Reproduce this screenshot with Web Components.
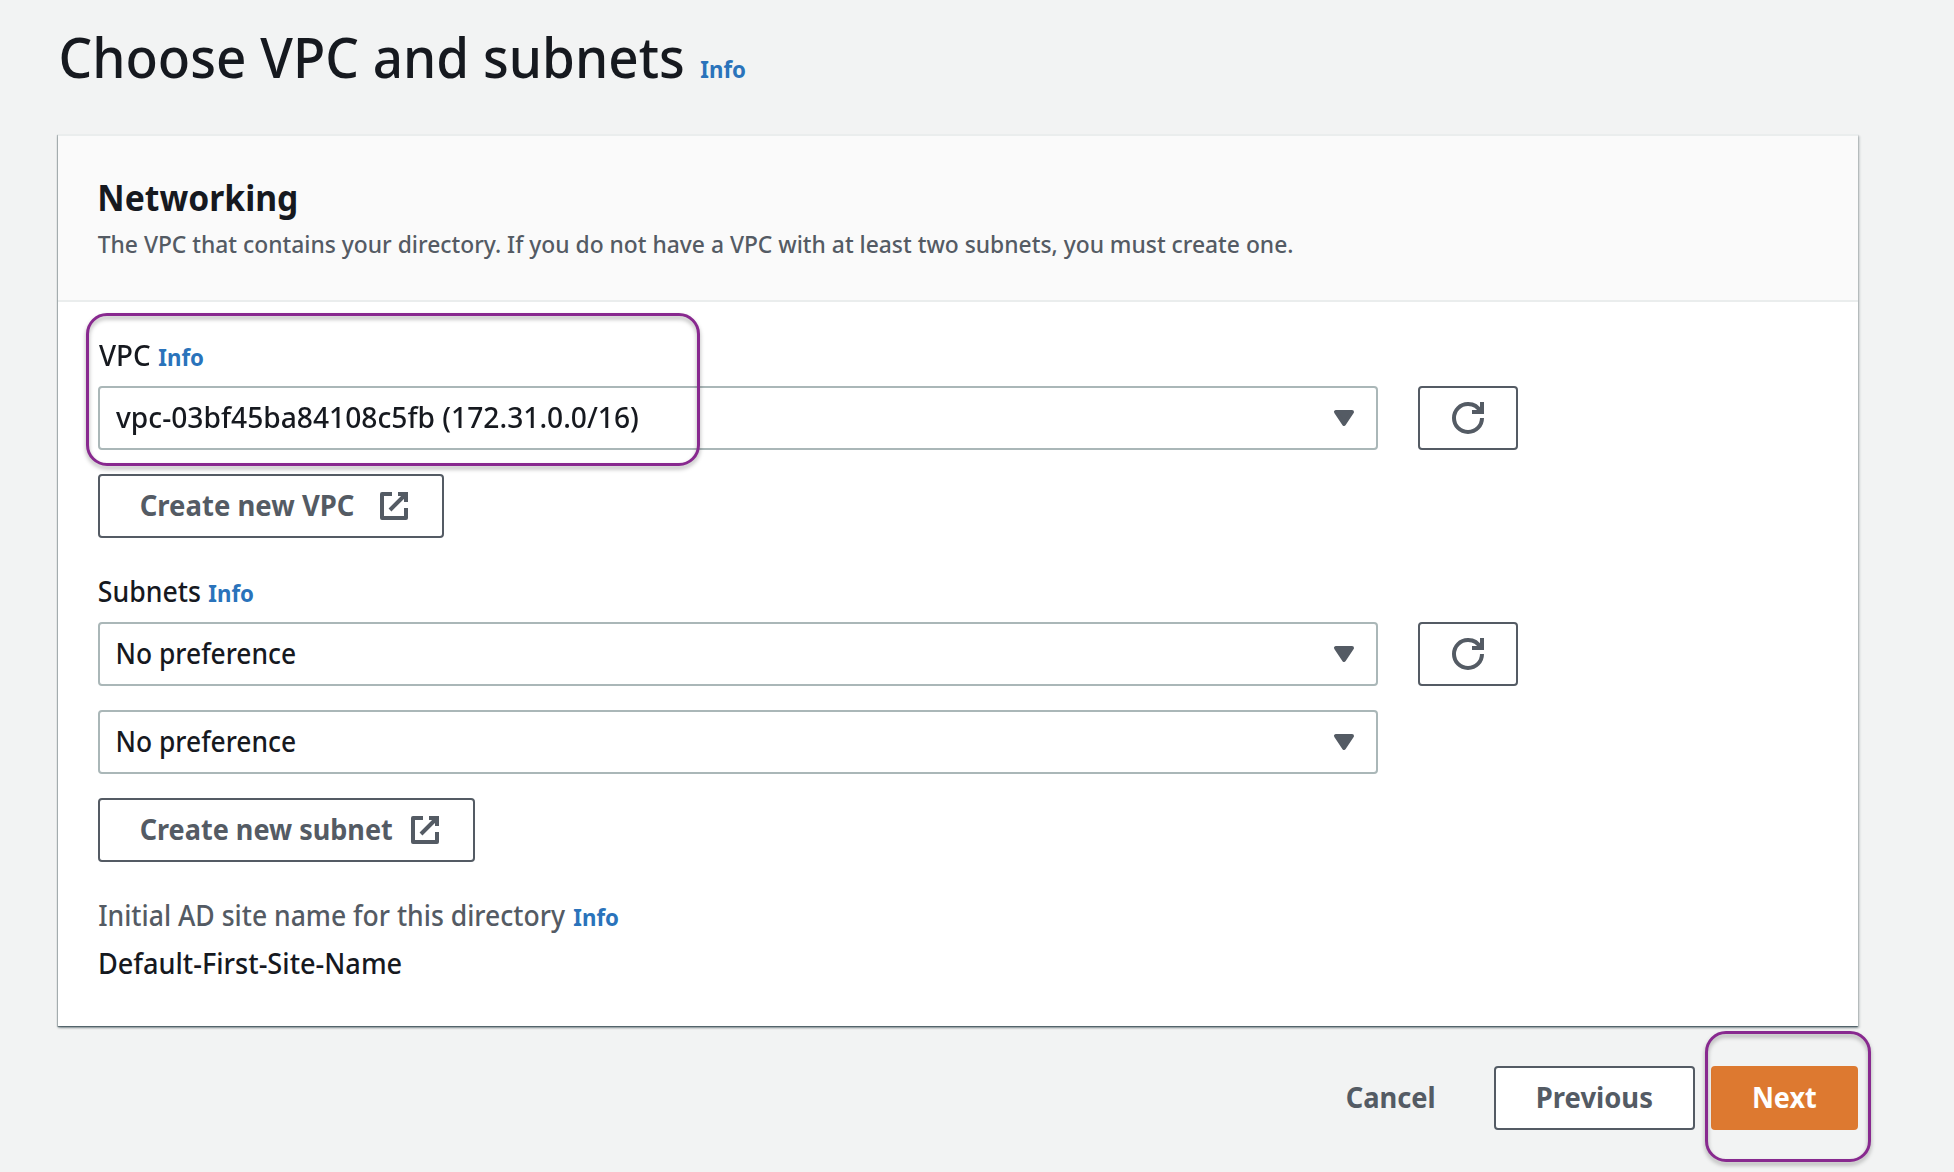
<!DOCTYPE html>
<html lang="en">
<head>
<meta charset="utf-8">
<title>Choose VPC and subnets</title>
<style>
html,body{margin:0;padding:0}
body{background:#f2f3f3;width:1954px;height:1172px;overflow:hidden;font-family:"Noto Sans","Open Sans",sans-serif;color:#16191f}
</style>
</head>
<body>
<vpc-page></vpc-page>
<script>
const define = (name, html, setup) => {
  const t = document.createElement('template');
  t.innerHTML = html;
  customElements.define(name, class extends HTMLElement {
    connectedCallback() {
      if (this.shadowRoot) return;
      this.attachShadow({mode: 'open'}).append(t.content.cloneNode(true));
      if (setup) setup(this, this.shadowRoot);
    }
  });
};

/* Text run whose inked width is set by the "w" attribute (px). */
const ctx = document.createElement('canvas').getContext('2d');
define('fit-text', `<style>
:host{display:block;flex:none;white-space:nowrap}
span{display:inline-block;transform-origin:0 50%}
</style><span><slot></slot></span>`, (el, root) => {
  const size = +(el.getAttribute('size') || 28), weight = el.getAttribute('weight') || 500;
  const lh = el.getAttribute('lh') || 40, w = +el.getAttribute('w');
  el.style.cssText += `;font-size:${size}px;font-weight:${weight};line-height:${lh}px;width:${w}px`;
  /* Measured at ten times the size, for side bearings finer than a pixel. */
  ctx.font = `${weight} ${size * 10}px "Noto Sans"`;
  const m = ctx.measureText(el.textContent);
  const left = -m.actualBoundingBoxLeft / 10, k = w / (m.actualBoundingBoxRight / 10 - left);
  root.querySelector('span').style.transform = `translateX(${-left * k}px) scaleX(${k})`;
});

define('info-link', `<style>:host{display:block;flex:none;color:#2a73bb}</style>
<fit-text size="24" weight="700" w="44">Info</fit-text>`);

define('ui-icon', `<style>
:host{display:block;flex:none;width:32px;height:32px;color:#545b64}
svg{display:block;width:32px;height:32px;overflow:visible;fill:none;stroke:currentColor;stroke-width:2}
g{display:none}
:host([name=caret]) .caret,:host([name=refresh]) .refresh,:host([name=external]) .external{display:inline}
</style><svg viewBox="0 0 16 16">
<g class="caret"><path d="M4 5h8l-4 6z" fill="currentColor" stroke-linejoin="round"/></g>
<g class="refresh"><path d="M10 5h5V0"/><path d="M15 8a6.957 6.957 0 0 1-7 7 6.957 6.957 0 0 1-7-7 6.957 6.957 0 0 1 7-7 6.87 6.87 0 0 1 6.3 4"/></g>
<g class="external"><path d="M10 2h4v4M6 10l8-8"/><path d="M14 9.05V14H2V2h5" stroke-linejoin="round"/></g>
</svg>`);

define('ui-button', `<style>
:host{display:flex;box-sizing:border-box;height:64px;align-items:center;flex:none;border:2px solid #545b64;border-radius:4px;background:#fff;color:#545b64}
:host([variant=link]){border-color:transparent;background:none}
:host([variant=primary]){border-color:#dd7930;background:#dd7930;color:#fff}
:host([icon-only]){width:100px;justify-content:center}
::slotted(fit-text){margin-bottom:2px}
</style><slot></slot>`);

define('ui-select', `<style>
:host{display:flex;box-sizing:border-box;width:1280px;height:64px;align-items:center;justify-content:space-between;border:2px solid #aab7b8;border-radius:4px;background:#fff;padding:0 16px 0 16px}
::slotted(fit-text){margin-bottom:2px}
</style><slot></slot><ui-icon name="caret"></ui-icon>`);

define('form-label', `<style>:host{display:flex;align-items:baseline;gap:9px;padding-left:1px;height:40px}</style><slot></slot><info-link></info-link>`);

define('highlight-box', `<style>
:host{display:block;position:absolute;box-sizing:border-box;border:3px solid #88298f;border-radius:21px;filter:drop-shadow(0 3px 2px rgba(0,0,0,.32));pointer-events:none}
</style>`);

define('ui-card', `<style>
:host{display:block;box-sizing:border-box;width:1800px;height:892px;background:#fff;border-top:2px solid #eaeded;box-shadow:0 2px 2px 0 rgba(0,28,36,.32),2px 2px 2px 0 rgba(0,28,36,.13),-1px 1px 1px 0 rgba(0,28,36,.2),0 1px 1px 0 rgba(0,28,36,.3)}
header{box-sizing:border-box;height:166px;background:#fafafa;border-bottom:2px solid #eaeded;padding:40px 0 0 40px;display:flex;flex-direction:column;gap:6px}
main{padding:33px 40px 0;display:flex;flex-direction:column}
</style><header><slot name="header"></slot></header><main><slot></slot></main>`);

define('vpc-page', `<style>
:host{display:block;position:relative;box-sizing:border-box;width:1954px;height:1172px;padding:20px 96px 0 58px}
.title{display:flex;align-items:baseline;gap:18px;height:114px;padding-left:3px}
.row{display:flex;gap:40px}
.field{display:flex;flex-direction:column;align-items:flex-start;margin-bottom:33px}
.field form-label{margin-bottom:11px}
.stack{margin-top:24px}
.desc{color:#545b64}
.site{margin:8px 0 0 2px}
.foot{display:flex;justify-content:flex-end;margin-top:40px}
.cancel{margin-right:58px}
.prev{width:201px;padding-left:42px;margin-right:16px}
.next{width:147px;padding-left:41px}
.vpc{width:346px;padding-left:41px}
.sub{width:377px;padding-left:41px}
.h1{left:86px;top:313px;width:614px;height:153px}
.h2{left:1705px;top:1031px;width:166px;height:131px}
</style>
<div class="title"><fit-text size="56" lh="72" w="622">Choose VPC and subnets</fit-text><info-link></info-link></div>
<ui-card>
  <fit-text slot="header" size="36" weight="700" lh="44" w="196" style="margin-left:2px">Networking</fit-text>
  <fit-text slot="header" class="desc" size="24" lh="36" w="1194">The VPC that contains your directory. If you do not have a VPC with at least two subnets, you must create one.</fit-text>
  <div class="field">
    <form-label><fit-text w="51">VPC</fit-text></form-label>
    <div class="row"><ui-select><fit-text w="522">vpc-03bf45ba84108c5fb (172.31.0.0/16)</fit-text></ui-select><ui-button icon-only><ui-icon name="refresh"></ui-icon></ui-button></div>
    <ui-button class="vpc stack"><fit-text weight="700" w="213">Create new VPC</fit-text><ui-icon name="external" style="margin-left:24px"></ui-icon></ui-button>
  </div>
  <div class="field">
    <form-label><fit-text w="101">Subnets</fit-text></form-label>
    <div class="row"><ui-select><fit-text w="177" style="margin-left:2px">No preference</fit-text></ui-select><ui-button icon-only><ui-icon name="refresh"></ui-icon></ui-button></div>
    <ui-select class="stack"><fit-text w="177" style="margin-left:2px">No preference</fit-text></ui-select>
    <ui-button class="sub stack"><fit-text weight="700" w="251">Create new subnet</fit-text><ui-icon name="external" style="margin-left:17px"></ui-icon></ui-button>
  </div>
  <form-label class="desc"><fit-text w="466">Initial AD site name for this directory</fit-text></form-label>
  <div class="site"><fit-text w="301">Default-First-Site-Name</fit-text></div>
</ui-card>
<div class="foot">
  <ui-button variant="link" class="cancel"><fit-text weight="700" w="87">Cancel</fit-text></ui-button>
  <ui-button class="prev"><fit-text weight="700" w="114">Previous</fit-text></ui-button>
  <ui-button variant="primary" class="next"><fit-text weight="700" w="62">Next</fit-text></ui-button>
</div>
<highlight-box class="h1"></highlight-box>
<highlight-box class="h2"></highlight-box>`);
</script>
</body>
</html>
